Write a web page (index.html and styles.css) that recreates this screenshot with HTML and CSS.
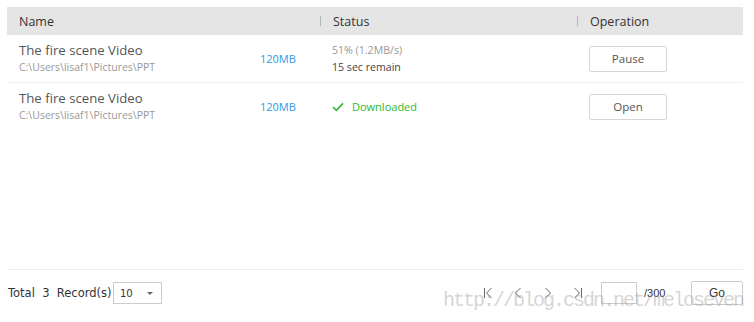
FILE: index.html
```html
<!DOCTYPE html>
<html lang="en">
<head>
<meta charset="utf-8">
<title>Downloads</title>
<link rel="stylesheet" href="styles.css">
</head>
<body>
<div class="panel">
    <div class="head">
        <div class="cell first">Name</div>
        <div class="cell"><span class="sep"></span>Status</div>
        <div class="cell"><span class="sep"></span>Operation</div>
    </div>
    <div class="list">
        <div class="row">
            <div class="cell first">
                <div class="title">The fire scene Video</div>
                <div class="path">C:\Users\lisaf1\Pictures\PPT</div>
            </div>
            <div class="cell size">120MB</div>
            <div class="cell status">
                <div class="speed">51% (1.2MB/s)</div>
                <div class="remain">15 sec remain</div>
            </div>
            <div class="cell"><button class="btn">Pause</button></div>
        </div>
        <div class="row">
            <div class="cell first">
                <div class="title">The fire scene Video</div>
                <div class="path">C:\Users\lisaf1\Pictures\PPT</div>
            </div>
            <div class="cell size">120MB</div>
            <div class="cell status">
                <div class="done">
                    <svg width="12" height="10" viewBox="0 0 12 10"><path d="M1 5.2 L4.4 8.4 L11 1.4" fill="none" stroke="#2eb82e" stroke-width="1.6"/></svg>
                    Downloaded
                </div>
            </div>
            <div class="cell"><button class="btn">Open</button></div>
        </div>
    </div>
    <div class="foot">
        <div class="total">Total&nbsp; 3&nbsp; Record(s)</div>
        <div class="select"><span>10</span><span class="caret"></span></div>
        <div class="pager">
            <!-- first / prev / next / last -->
            <svg class="pg" width="10" height="12" viewBox="0 0 10 12"><path d="M1.5 1 V11 M8.5 1 L3.5 6 L8.5 11" fill="none" stroke="#666" stroke-width="1"/></svg>
            <svg class="pg" width="10" height="12" viewBox="0 0 10 12"><path d="M7.5 1 L2.5 6 L7.5 11" fill="none" stroke="#666" stroke-width="1"/></svg>
            <svg class="pg" width="10" height="12" viewBox="0 0 10 12"><path d="M2.5 1 L7.5 6 L2.5 11" fill="none" stroke="#666" stroke-width="1"/></svg>
            <svg class="pg" width="10" height="12" viewBox="0 0 10 12"><path d="M1.5 1 L6.5 6 L1.5 11 M8.5 1 V11" fill="none" stroke="#666" stroke-width="1"/></svg>
            <span class="page-input"></span>
            <span class="count">/300</span>
            <button class="go">Go</button>
        </div>
    </div>
    <div class="mark">http://blog.csdn.net/meloseven</div>
</div>
</body>
</html>
```

FILE: styles.css
```css
body {
    margin: 0;
    padding: 7px 11px 0 7px;
    background: #fff;
    font-family: "Open Sans", "Noto Sans", sans-serif;
    color: #555;
}

.panel {
    position: relative;
    width: 736px;
}

.head, .row {
    display: grid;
    grid-template-columns: 241px 72px 257px 166px;
}

.head {
    grid-template-columns: 313px 257px 166px;
    height: 28px;
    align-items: center;
    background: #e5e5e5;
    font-size: 12.5px;
    color: #333;
}

.cell {
    padding-left: 12px;
}

.head .cell {
    display: flex;
    align-items: center;
    padding-left: 0;
}

.head .first {
    padding-left: 12px;
}

.sep {
    width: 1px;
    height: 10px;
    background: #b5b5b5;
    margin-right: 12px;
}

.list {
    height: 234px;
    border-bottom: 1px solid #ebebeb;
}

.row {
    height: 47px;
    align-items: center;
    border-bottom: 1px solid #f2f2f2;
}

.row:last-child {
    border-bottom: none;
}

.title {
    font-size: 13.2px;
    line-height: 17px;
    color: #555;
}

.path {
    font-size: 10.5px;
    line-height: 17px;
    color: #999;
}

.size {
    font-size: 11px;
    color: #3399e6;
}

.speed {
    font-size: 10.6px;
    line-height: 17px;
    color: #999;
}

.remain {
    font-size: 10.6px;
    line-height: 17px;
    color: #444;
}

.done {
    display: flex;
    align-items: center;
    gap: 8px;
    font-size: 11px;
    color: #2eb82e;
}

.btn {
    width: 78px;
    height: 26px;
    border: 1px solid #d6d6d6;
    border-radius: 2px;
    background: #fff;
    font: 11.5px "Open Sans", sans-serif;
    color: #555;
}

.foot {
    display: flex;
    align-items: center;
    height: 46px;
    padding-left: 1px;
}

.total {
    font: 11.5px "DejaVu Sans", sans-serif;
    color: #333;
    width: 105px;
}

.select {
    display: flex;
    align-items: center;
    justify-content: space-between;
    box-sizing: border-box;
    width: 49px;
    height: 22px;
    border: 1px solid #ccc;
    padding: 0 8px 0 6px;
    font: 10px "DejaVu Sans", sans-serif;
    color: #333;
}

.caret {
    border-left: 3px solid transparent;
    border-right: 3px solid transparent;
    border-top: 3px solid #666;
}

.pager {
    display: flex;
    align-items: center;
    font: 12px "Liberation Sans", sans-serif;
    color: #555;
    margin-left: auto;
}

.pg {
    margin-left: 20px;
}

.pg:first-child {
    margin-left: 0;
}

.page-input {
    box-sizing: border-box;
    width: 36px;
    height: 22px;
    border: 1px solid #ccc;
    margin-left: 18px;
}

.count {
    margin-left: 7px;
    width: 47px;
    font-size: 11px;
    color: #333;
}

.go {
    width: 52px;
    height: 24px;
    border: 1px solid #ccc;
    border-radius: 2px;
    background: #fff;
    font: 12px "Liberation Sans", sans-serif;
    color: #333;
}

.mark {
    position: absolute;
    right: 0;
    bottom: 4px;
    font: 20px "Liberation Mono", monospace;
    letter-spacing: -2px;
    color: rgba(160, 160, 160, 0.45);
    pointer-events: none;
}
```
